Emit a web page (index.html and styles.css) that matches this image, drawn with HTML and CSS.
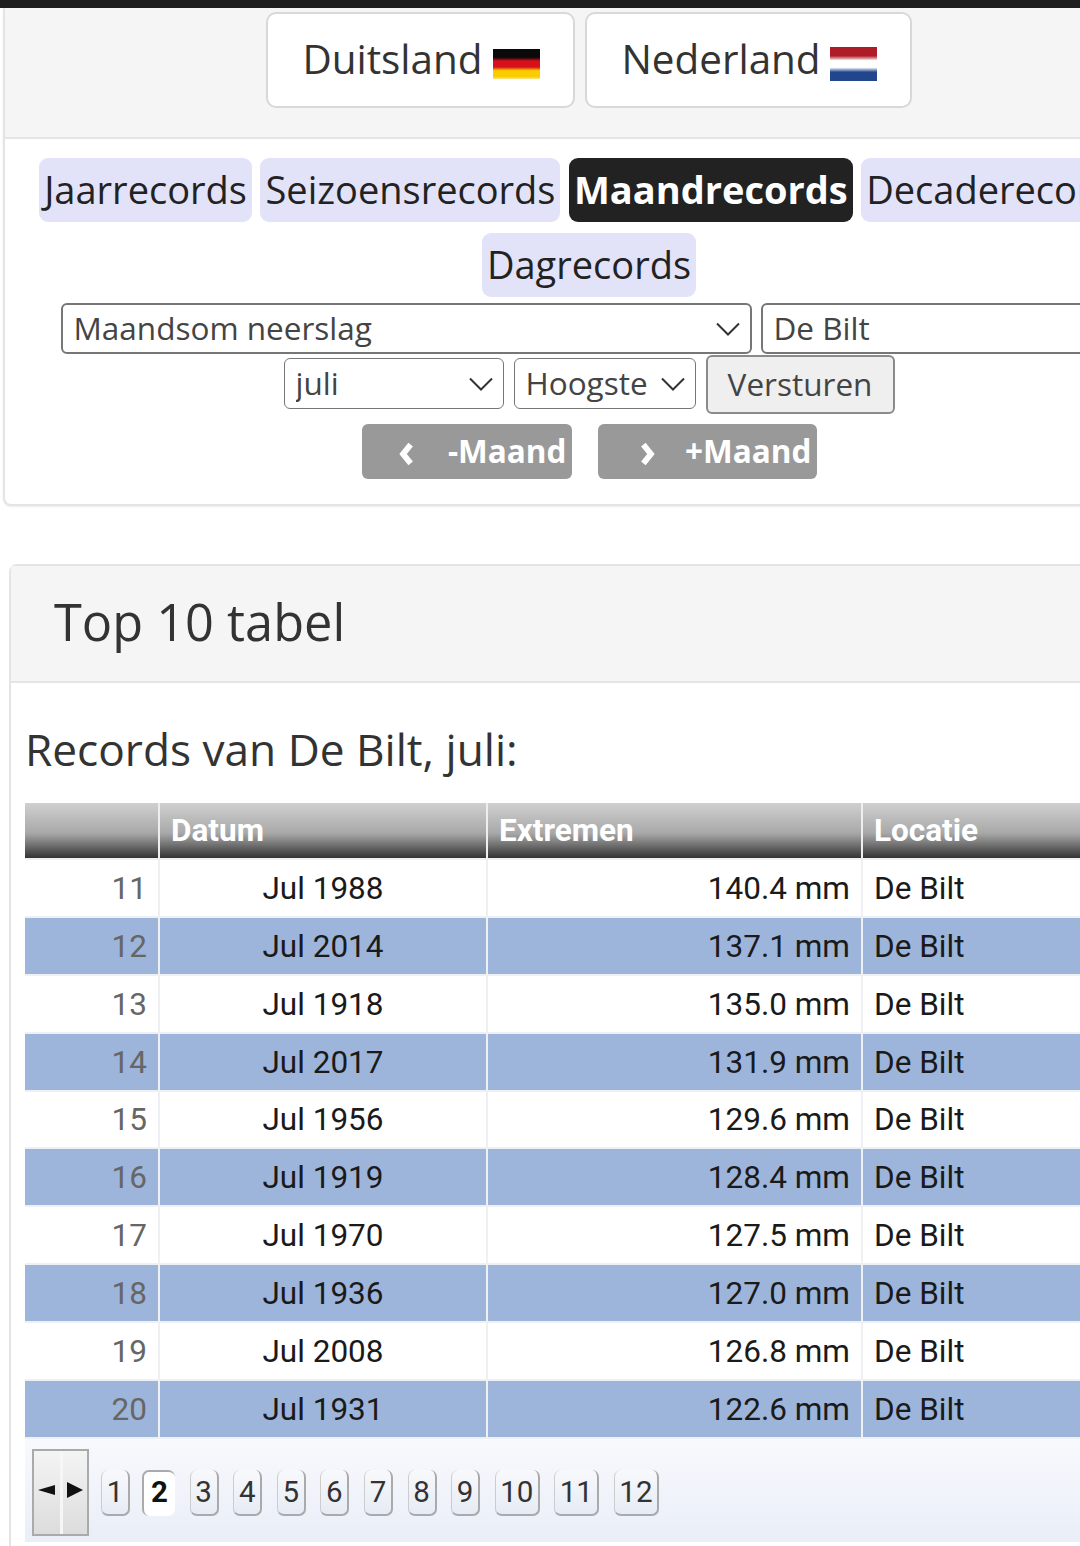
FILE: index.html
```html
<!DOCTYPE html>
<html lang="nl">
<head>
    <meta charset="UTF-8">
    <meta name="viewport" content="width=device-width, initial-scale=1.0">
    <title>Records van De Bilt</title>
    <link rel="stylesheet" href="styles.css">
</head>
<body>
    <div class="topbar"></div>

    <div class="panel">
        <div class="panel-head countries">
            <a class="country" href="#">Duitsland <span class="flag flag-de"></span></a>
            <a class="country" href="#">Nederland <span class="flag flag-nl"></span></a>
        </div>
        <div class="panel-body">
            <div class="tabs">
                <a class="tab" href="#">Jaarrecords</a>
                <a class="tab" href="#">Seizoensrecords</a>
                <a class="tab active" href="#">Maandrecords</a>
                <a class="tab" href="#">Decaderecords</a>
                <a class="tab" href="#">Dagrecords</a>
            </div>
            <form class="filters">
                <div class="filter-row row-top">
                    <select class="sel sel-type"><option>Maandsom neerslag</option></select>
                    <select class="sel sel-station"><option>De Bilt</option></select>
                </div>
                <div class="filter-row row-mid">
                    <select class="sel sel-month"><option>juli</option></select>
                    <select class="sel sel-order"><option>Hoogste</option></select>
                    <button class="submit" type="button">Versturen</button>
                </div>
                <div class="filter-row row-nav">
                    <a class="nav-btn nav-prev" href="#">
                        <svg class="nav-icon" viewBox="0 0 16 24"><path d="M12 4 5.500 12l6.500 8" /></svg>
                        -Maand
                    </a>
                    <a class="nav-btn nav-next" href="#">
                        <svg class="nav-icon" viewBox="0 0 16 24"><path d="M4 4l6.500 8L4 20" /></svg>
                        +Maand
                    </a>
                </div>
            </form>
        </div>
    </div>

    <div class="card">
        <div class="card-head">Top 10 tabel</div>
        <div class="card-body">
            <h2 class="records-title">Records van De Bilt, juli:</h2>
            <table class="records">
                <thead>
                    <tr>
                        <th class="col-rank"></th>
                        <th class="col-date">Datum</th>
                        <th class="col-value">Extremen</th>
                        <th class="col-place">Locatie</th>
                    </tr>
                </thead>
                <tbody>
                    <tr><td class="rank">11</td><td class="date">Jul 1988</td><td class="value">140.4 mm</td><td>De Bilt</td></tr>
                    <tr><td class="rank">12</td><td class="date">Jul 2014</td><td class="value">137.1 mm</td><td>De Bilt</td></tr>
                    <tr><td class="rank">13</td><td class="date">Jul 1918</td><td class="value">135.0 mm</td><td>De Bilt</td></tr>
                    <tr><td class="rank">14</td><td class="date">Jul 2017</td><td class="value">131.9 mm</td><td>De Bilt</td></tr>
                    <tr><td class="rank">15</td><td class="date">Jul 1956</td><td class="value">129.6 mm</td><td>De Bilt</td></tr>
                    <tr><td class="rank">16</td><td class="date">Jul 1919</td><td class="value">128.4 mm</td><td>De Bilt</td></tr>
                    <tr><td class="rank">17</td><td class="date">Jul 1970</td><td class="value">127.5 mm</td><td>De Bilt</td></tr>
                    <tr><td class="rank">18</td><td class="date">Jul 1936</td><td class="value">127.0 mm</td><td>De Bilt</td></tr>
                    <tr><td class="rank">19</td><td class="date">Jul 2008</td><td class="value">126.8 mm</td><td>De Bilt</td></tr>
                    <tr><td class="rank">20</td><td class="date">Jul 1931</td><td class="value">122.6 mm</td><td>De Bilt</td></tr>
                </tbody>
            </table>
            <div class="pager">
                <div class="arrows">
                    <a class="arrow" href="#"><span class="tri tri-left"></span></a>
                    <a class="arrow" href="#"><span class="tri tri-right"></span></a>
                </div>
                <div class="pages">
                    <a class="page" href="#">1</a>
                    <a class="page current" href="#">2</a>
                    <a class="page" href="#">3</a>
                    <a class="page" href="#">4</a>
                    <a class="page" href="#">5</a>
                    <a class="page" href="#">6</a>
                    <a class="page" href="#">7</a>
                    <a class="page" href="#">8</a>
                    <a class="page" href="#">9</a>
                    <a class="page wide" href="#">10</a>
                    <a class="page wide" href="#">11</a>
                    <a class="page wide" href="#">12</a>
                </div>
            </div>
        </div>
    </div>
</body>
</html>
```

FILE: styles.css
```css
html, body {
    margin: 0;
    padding: 0;
    height: 1546px;
    overflow: hidden;
}

body {
    width: 1080px;
    background: white;
    font-family: "Open Sans", Arial, sans-serif;
    color: #333;
}

a {
    text-decoration: none;
    color: inherit;
}

.topbar {
    height: 8px;
    background: #1e1e1e;
}

/* top panel, wider than the viewport */
.panel {
    width: 1172px;
    height: 498px;
    margin-left: 3px;
    box-sizing: border-box;
    background: white;
    border: 2px solid #e4e4e4;
    border-top: none;
    border-radius: 0 0 8px 8px;
    box-shadow: 0 1px 2px rgba(0, 0, 0, 0.08);
}

.panel-head {
    background: #f5f5f5;
    border-bottom: 2px solid #e4e4e4;
}

.countries {
    height: 131px;
    box-sizing: border-box;
    padding-top: 4px;
    display: flex;
    justify-content: center;
    gap: 10px;
}

.country {
    height: 96px;
    box-sizing: border-box;
    padding: 0 33px 2px 34px;
    display: flex;
    align-items: center;
    gap: 11px;
    background: white;
    border: 2px solid #d8d8d8;
    border-radius: 10px;
    font-size: 40.400px;
    line-height: 1;
}

.country + .country {
    gap: 9px;
}

.flag {
    display: block;
    width: 47px;
}

.flag-de {
    height: 30px;
    margin-top: 10px;
    background: linear-gradient(#0a0a0a 0 28%, #d8101c 40% 60%, #fbcc00 72% 92%, #fde68a 100%);
}

.flag-nl {
    height: 34px;
    margin-top: 10px;
    background: linear-gradient(#ae1c28 0 26%, #fff 40% 60%, #21468b 74% 100%);
}

.panel-body {
    padding-top: 19px;
}

.tabs {
    display: flex;
    flex-wrap: wrap;
    justify-content: center;
    align-content: flex-start;
    column-gap: 8.500px;
    row-gap: 11px;
    height: 145px;
    font-size: 38px;
    line-height: 62px;
}

.tab {
    padding: 0 5px 2px;
    background: #e2e3f8;
    border-radius: 9px;
    color: #222;
}

.tab.active {
    background: #222;
    color: white;
    font-weight: 700;
}

.filter-row {
    display: flex;
    justify-content: center;
}

.sel {
    appearance: none;
    box-sizing: border-box;
    background: white url("data:image/svg+xml,%3Csvg xmlns='http://www.w3.org/2000/svg' width='24' height='14'%3E%3Cpath d='M1 1.500 12 12.500 23 1.500' fill='none' stroke='%23333' stroke-width='2'/%3E%3C/svg%3E") no-repeat right 10px center;
    border: 2px solid #767676;
    border-radius: 6px;
    font-family: "Open Sans", Arial, sans-serif;
    font-size: 31.500px;
    color: #444;
    padding: 0 11px 2px;
    margin: 0;
}

.row-top {
    gap: 9px;
    height: 51px;
}

.sel-type {
    width: 691px;
    height: 51px;
}

.sel-station {
    width: 357px;
    height: 51px;
}

.row-mid {
    margin-top: 1px;
    height: 59px;
    align-items: flex-start;
    gap: 10px;
}

.sel-month {
    width: 220px;
    height: 51px;
    margin-top: 3px;
    border-width: 1.500px;
}

.sel-order {
    width: 182px;
    height: 51px;
    margin-top: 3px;
    border-width: 1.500px;
    background-position: right 10px center;
}

.submit {
    width: 189px;
    height: 59px;
    box-sizing: border-box;
    background: #efefef;
    border: 2px solid #8a8a8a;
    border-radius: 6px;
    font-family: "Open Sans", Arial, sans-serif;
    font-size: 31.500px;
    color: #444;
    padding: 0 0 3px;
}

.row-nav {
    margin-top: 10px;
    gap: 26px;
}

.nav-btn {
    height: 55px;
    box-sizing: border-box;
    padding: 0 5px 2px 0;
    display: flex;
    align-items: center;
    justify-content: flex-end;
    background: #999;
    border-radius: 6px;
    color: white;
    font-size: 31.500px;
    font-weight: 700;
}

.nav-prev {
    width: 210px;
}

.nav-next {
    width: 219px;
}

.nav-icon {
    width: 20px;
    height: 28px;
    margin: 7px 32px 0 0;
    fill: none;
    stroke: white;
    stroke-width: 5;
}

.nav-next .nav-icon {
    margin-right: 27px;
}

/* second card */
.card {
    width: 1170px;
    margin: 58px 0 0 9px;
    box-sizing: border-box;
    border: 2px solid #e4e4e4;
    border-radius: 8px 0 0 0;
    height: 1000px;
}

.card-head {
    height: 117px;
    box-sizing: border-box;
    padding: 22px 0 0 43px;
    background: #f5f5f5;
    border-bottom: 2px solid #e4e4e4;
    font-size: 50.500px;
    line-height: 68px;
    color: #333;
}

.card-body {
    padding: 0 0 0 14px;
}

.records-title {
    margin: 0;
    padding: 35px 0 23px;
    font-size: 44.200px;
    font-weight: 400;
    line-height: 62px;
    color: #333;
}

.records {
    width: 1140px;
    table-layout: fixed;
    border-collapse: collapse;
    font-family: Roboto, Arial, sans-serif;
    font-size: 31.500px;
    color: #1a1a1a;
}

.records th {
    height: 56px;
    padding: 0 11px;
    box-sizing: border-box;
    background: linear-gradient(#d0d0d0, #a8a8a8 55%, #333);
    border-left: 2px solid #eee;
    border-right: 2px solid #eee;
    text-align: left;
    font-size: 31.500px;
    font-weight: 700;
    color: white;
}

.records th:first-child {
    border-left: none;
}

.col-rank {
    width: 134px;
}

.col-date {
    width: 328px;
}

.col-value {
    width: 375px;
}

.records td {
    height: 58px;
    padding: 0 11px;
    box-sizing: border-box;
    border: 2px solid #eef0f4;
}

.records td:first-child {
    border-left: none;
}

.records tbody tr:nth-child(5) td {
    height: 57px;
}

.records tbody tr:nth-child(even) td {
    background: #9db5da;
}

.records .rank {
    text-align: right;
    color: #666;
}

.records .date {
    text-align: center;
}

.records .value {
    text-align: right;
}

.pager {
    width: 1140px;
    height: 103px;
    display: flex;
    align-items: flex-start;
    background: linear-gradient(#f8f9fd, #e9eef7);
    font-family: Roboto, Arial, sans-serif;
}

.arrows {
    display: flex;
    margin: 10px 0 0 7px;
    height: 87px;
    width: 57px;
    box-sizing: border-box;
    border: 2px solid #aaa;
    background: linear-gradient(#f4f4f4, #dcdcdc);
}

.arrow {
    flex: 1;
    display: flex;
    align-items: center;
    justify-content: center;
    padding-bottom: 6px;
}

.arrow + .arrow {
    border-left: 2px solid #f6f6f6;
    box-shadow: inset 1px 0 0 #f6f6f6;
}

.tri {
    display: block;
    width: 0;
    height: 0;
}

.tri-left {
    border-top: 5px solid transparent;
    border-bottom: 5px solid transparent;
    border-right: 17px solid #111;
}

.tri-right {
    border-top: 8px solid transparent;
    border-bottom: 8px solid transparent;
    border-left: 16px solid #111;
    margin-left: 2px;
}

.pages {
    display: flex;
    gap: 14.600px;
    margin: 31px 0 0 12px;
}

.page {
    width: 29px;
    height: 46px;
    box-sizing: border-box;
    display: flex;
    align-items: center;
    justify-content: center;
    background: linear-gradient(#f8f9fc, #e6ebf4);
    border-right: 2px solid #aaa;
    border-bottom: 2px solid #aaa;
    border-left: 1px solid #ccc;
    border-radius: 7px;
    font-size: 29.500px;
    color: #333;
}

.page.wide {
    width: 45px;
}

.page.current {
    width: 33px;
    margin-left: -2.600px;
    padding-bottom: 4px;
    background: white;
    border: none;
    border-top: 2px solid #aaa;
    border-left: 2px solid #aaa;
    font-weight: 700;
    color: #111;
}
```
